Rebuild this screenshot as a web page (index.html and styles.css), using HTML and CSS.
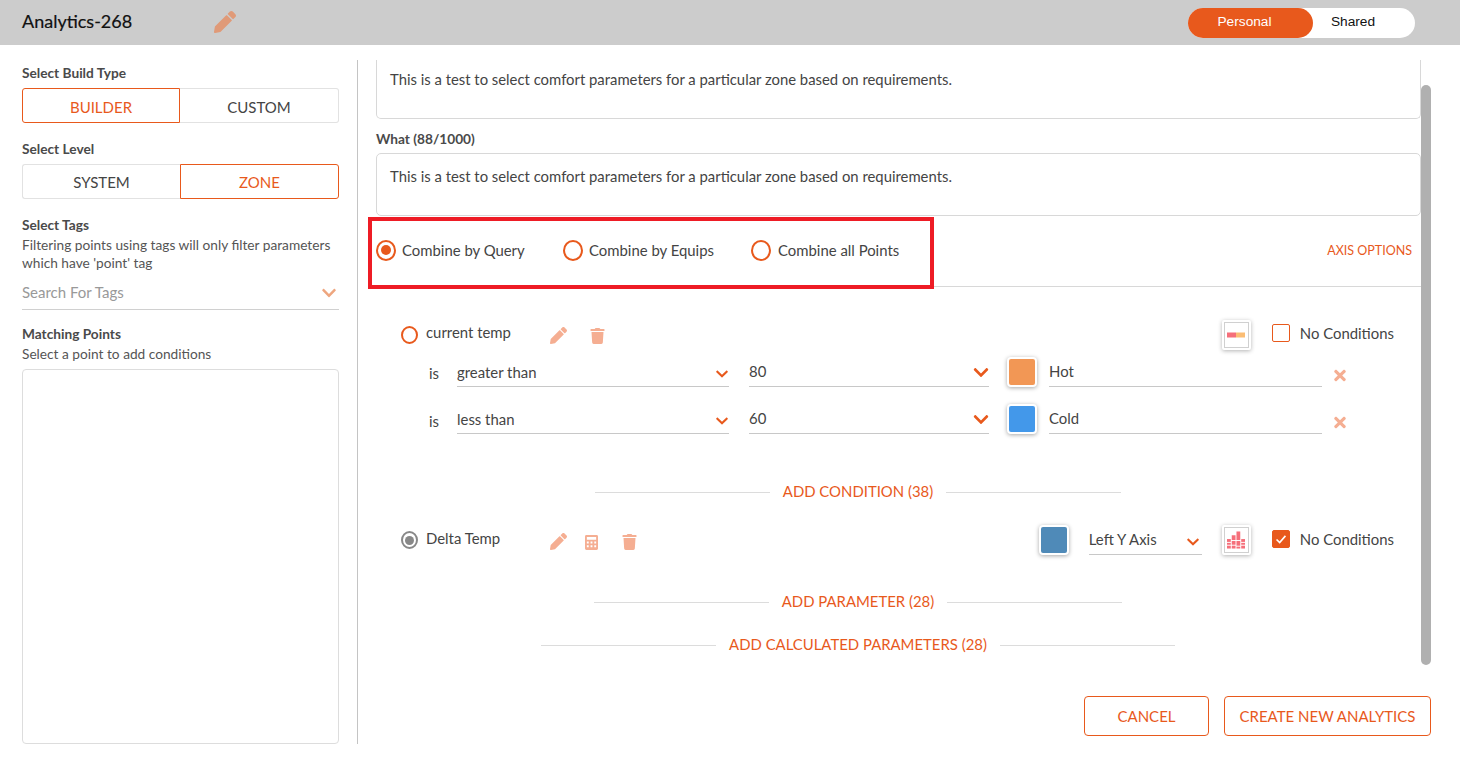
FILE: index.html
```html
<!DOCTYPE html>
<html lang="en">
<head>
<meta charset="utf-8">
<title>Analytics-268</title>
<link rel="stylesheet" href="styles.css">
</head>
<body>
<svg class="defs" aria-hidden="true">
  <symbol id="i-pencil" viewBox="0 0 512 512"><path d="M497.9 142.1l-46.1 46.1c-4.7 4.7-12.3 4.7-17 0l-111-111c-4.7-4.7-4.7-12.3 0-17l46.1-46.1c18.7-18.7 49.1-18.7 67.9 0l60.1 60.1c18.8 18.7 18.8 49.1 0 67.9zM284.2 99.8L21.6 362.4.4 483.9c-2.9 16.4 11.4 30.6 27.8 27.8l121.5-21.3 262.6-262.6c4.7-4.7 4.7-12.3 0-17l-111-111c-4.8-4.7-12.4-4.7-17.1 0z"/></symbol>
  <symbol id="i-trash" viewBox="0 0 448 512"><path d="M432 32H312l-9.4-18.7A24 24 0 0 0 281.1 0H166.8a23.72 23.72 0 0 0-21.4 13.3L136 32H16A16 16 0 0 0 0 48v32a16 16 0 0 0 16 16h416a16 16 0 0 0 16-16V48a16 16 0 0 0-16-16zM53.2 467a48 48 0 0 0 47.9 45h245.8a48 48 0 0 0 47.9-45L416 128H32z"/></symbol>
  <symbol id="i-chev" viewBox="0 0 448 512"><path d="M207.029 381.476L12.686 187.132c-9.373-9.373-9.373-24.569 0-33.941l22.667-22.667c9.357-9.357 24.522-9.375 33.901-.04L224 284.505l154.745-154.021c9.379-9.335 24.544-9.317 33.901.04l22.667 22.667c9.373 9.373 9.373 24.569 0 33.941L240.971 381.476c-9.373 9.372-24.569 9.372-33.942 0z"/></symbol>
  <symbol id="i-x" viewBox="0 0 352 512"><path d="M242.72 256l100.07-100.07c12.28-12.28 12.28-32.19 0-44.48l-22.24-22.24c-12.28-12.28-32.19-12.28-44.48 0L176 189.28 75.93 89.21c-12.28-12.28-32.19-12.28-44.48 0L9.21 111.45c-12.28 12.28-12.28 32.19 0 44.48L109.28 256 9.21 356.07c-12.28 12.28-12.28 32.19 0 44.48l22.24 22.24c12.28 12.28 32.2 12.28 44.48 0L176 322.72l100.07 100.07c12.28 12.28 32.2 12.28 44.48 0l22.24-22.24c12.28-12.28 12.28-32.19 0-44.48L242.72 256z"/></symbol>
  <symbol id="i-calc" viewBox="0 0 14 16"><path fill-rule="evenodd" d="M1.5 0h11A1.5 1.5 0 0 1 14 1.5v13a1.5 1.5 0 0 1-1.500 1.500h-11A1.500 1.500 0 0 1 0 14.500v-13A1.500 1.500 0 0 1 1.500 0zM2 2v3h10V2zM2 7v2h2V7zM6 7v2h2V7zM10 7v2h2V7zM2 11v2h2v-2zM6 11v2h2v-2zM10 11v2h2v-2z"/></symbol>
</svg>

<header class="topbar">
  <h1 class="title">Analytics-268</h1>
  <svg class="title-edit"><use href="#i-pencil"/></svg>
  <div class="scope">
    <span class="scope-item scope-on">Personal</span>
    <span class="scope-item">Shared</span>
  </div>
</header>

<div class="content">
  <aside class="sidebar">
    <div class="side-label">Select Build Type</div>
    <div class="seg">
      <span class="seg-item seg-low seg-on">BUILDER</span>
      <span class="seg-item seg-low">CUSTOM</span>
    </div>
    <div class="side-label side-gap">Select Level</div>
    <div class="seg">
      <span class="seg-item">SYSTEM</span>
      <span class="seg-item seg-on">ZONE</span>
    </div>
    <div class="side-label side-gap">Select Tags</div>
    <p class="side-note">Filtering points using tags will only filter parameters which have 'point' tag</p>
    <div class="tag-search">
      <span class="tag-text">Search For Tags</span>
      <svg class="tag-chev"><use href="#i-chev"/></svg>
    </div>
    <div class="side-label match-label">Matching Points</div>
    <p class="side-note">Select a point to add conditions</p>
    <div class="points-box"></div>
  </aside>

  <main class="main">
    <div class="pane">
      <div class="textbox textbox-first">This is a test to select comfort parameters for a particular zone based on requirements.</div>
      <div class="what-label">What (88/1000)</div>
      <div class="textbox textbox-second">This is a test to select comfort parameters for a particular zone based on requirements.</div>

      <div class="combine">
        <label class="combine-item combine-a"><span class="radio radio-big radio-on"></span>Combine by Query</label>
        <label class="combine-item combine-b"><span class="radio radio-big"></span>Combine by Equips</label>
        <label class="combine-item combine-c"><span class="radio radio-big"></span>Combine all Points</label>
        <span class="axis-link">AXIS OPTIONS</span>
        <div class="highlight"></div>
      </div>

      <div class="params">
        <div class="param param-first">
          <span class="radio radio-small"></span>
          <span class="param-name">current temp</span>
          <svg class="ico ico-pencil"><use href="#i-pencil"/></svg>
          <svg class="ico ico-trash ico-trash-a"><use href="#i-trash"/></svg>
          <span class="param-spacer"></span>
          <span class="thumb">
            <svg class="thumb-art" viewBox="0 0 18 18"><rect x="0" y="6.500" width="9" height="5" fill="#f56f7a"/><rect x="9" y="6.500" width="9" height="5" fill="#fbbd74"/></svg>
          </span>
          <span class="check"></span>
          <span class="check-text">No Conditions</span>
        </div>

        <div class="cond cond-first">
          <span class="cond-is">is</span>
          <div class="field field-op"><span class="op-text">greater than</span><svg class="chev chev-small"><use href="#i-chev"/></svg></div>
          <div class="field field-val"><span class="val-text">80</span><svg class="chev"><use href="#i-chev"/></svg></div>
          <span class="swatch swatch-orange"></span>
          <div class="field field-name"><span class="val-text">Hot</span></div>
          <svg class="ico-x"><use href="#i-x"/></svg>
        </div>
        <div class="cond cond-second">
          <span class="cond-is cond-is-low">is</span>
          <div class="field field-op"><span class="op-text">less than</span><svg class="chev chev-small"><use href="#i-chev"/></svg></div>
          <div class="field field-val"><span class="val-text">60</span><svg class="chev"><use href="#i-chev"/></svg></div>
          <span class="swatch swatch-blue"></span>
          <div class="field field-name"><span class="val-text">Cold</span></div>
          <svg class="ico-x"><use href="#i-x"/></svg>
        </div>

        <div class="adder adder-cond"><i class="adder-line"></i><span>ADD CONDITION (38)</span><i class="adder-line"></i></div>

        <div class="param param-delta">
          <span class="radio radio-small radio-grey"></span>
          <span class="param-name">Delta Temp</span>
          <svg class="ico ico-pencil"><use href="#i-pencil"/></svg>
          <svg class="ico ico-calc"><use href="#i-calc"/></svg>
          <svg class="ico ico-trash ico-trash-b"><use href="#i-trash"/></svg>
          <span class="param-spacer"></span>
          <span class="swatch swatch-steel"></span>
          <div class="field field-axis"><span class="axis-text">Left Y Axis</span><svg class="chev chev-small"><use href="#i-chev"/></svg></div>
          <span class="thumb">
            <svg class="thumb-art" viewBox="0 0 19 18">
              <g fill="#f56f7a">
                <rect x="0" y="8" width="4" height="3"/><rect x="0" y="12" width="4" height="2"/><rect x="0" y="15" width="4" height="3"/>
                <rect x="5" y="4" width="4" height="5"/><rect x="5" y="10" width="4" height="4"/><rect x="5" y="15" width="4" height="3"/>
                <rect x="10" y="0" width="4" height="9"/><rect x="10" y="10" width="4" height="5"/><rect x="10" y="16" width="4" height="2"/>
                <rect x="15" y="8" width="4" height="3"/><rect x="15" y="12" width="4" height="2"/><rect x="15" y="15" width="4" height="3"/>
              </g>
            </svg>
          </span>
          <span class="check check-on"><svg class="check-mark" viewBox="0 0 18 18"><path d="M4 9.500l3.500 3.500L14 5.500" fill="none" stroke="#fff" stroke-width="1.800"/></svg></span>
          <span class="check-text">No Conditions</span>
        </div>

        <div class="adder adder-param"><i class="adder-line"></i><span>ADD PARAMETER (28)</span><i class="adder-line"></i></div>
        <div class="adder adder-calc"><i class="adder-line"></i><span>ADD CALCULATED PARAMETERS (28)</span><i class="adder-line"></i></div>
      </div>
      <div class="scroll-thumb"></div>
    </div>

    <div class="actions">
      <button class="btn btn-cancel">CANCEL</button>
      <button class="btn btn-create">CREATE NEW ANALYTICS</button>
    </div>
  </main>
</div>
</body>
</html>
```

FILE: styles.css
```css
* { box-sizing: border-box; }
html, body { margin: 0; height: 100%; }
body {
  width: 1460px;
  height: 768px;
  overflow: hidden;
  background: #fff;
  color: #444;
  font-family: Lato, "Liberation Sans", sans-serif;
  font-size: 14.9px;
}
.defs { display: none; }

/* Top bar */
.topbar {
  height: 45px;
  background: #ccc;
  display: flex;
  align-items: center;
  padding: 0 45px 2px 22px;
}
.title { margin: -2px 0 0; width: 192px; font-size: 18px; font-weight: 400; color: #111; -webkit-text-stroke: 0.2px #111; }
.title-edit { width: 22px; height: 22px; fill: #e09a78; }
.scope {
  margin-left: auto;
  width: 227px;
  height: 30px;
  margin-top: 2px;
  background: #fff;
  border-radius: 15px;
  display: flex;
  font-family: "Liberation Sans", Arial, sans-serif;
  font-size: 13.700px;
  color: #111;
}
.scope-item { display: flex; align-items: center; justify-content: center; width: 80px; padding-bottom: 2px; }
.scope-on { width: 125px; padding-right: 12px; background: #e8591c; color: #fff; border-radius: 15px; }

/* Layout */
.content { display: flex; }

/* Sidebar */
.sidebar {
  width: 358px;
  height: 684px;
  margin-top: 15px;
  padding: 5px 18px 0 22px;
  border-right: 1px solid #c4c4c4;
  display: flex;
  flex-direction: column;
}
.side-label { font-size: 13.700px; font-weight: 700; color: #4a4a4a; line-height: 16px; height: 16px; }
.side-gap { margin-top: 18px; }
.seg { display: flex; height: 35px; margin-top: 7px; }
.seg-item {
  flex: 1;
  display: flex;
  align-items: center;
  justify-content: center;
  border: 1px solid #e2e2e2;
  font-size: 15px;
  color: #444;
}
.seg-low { padding-top: 2px; }
.seg-item:first-child { flex: none; width: 158px; border-radius: 3px 0 0 3px; border-right: 0; }
.seg-item:last-child { border-radius: 0 3px 3px 0; border-left: 0; }
.seg-on, .seg-item.seg-on:first-child, .seg-item.seg-on:last-child { border: 1px solid #e8591c; color: #e8591c; }
.side-note { margin: 3px 0 0; font-size: 13.700px; line-height: 18px; color: #555; }
.tag-search {
  margin-top: 4px;
  height: 34px;
  padding-right: 3px;
  display: flex;
  align-items: center;
  justify-content: space-between;
  border-bottom: 1px solid #d0d0d0;
  color: #999;
  font-size: 15px;
}
.tag-text { margin-top: -2px; }
.tag-chev { width: 14px; height: 16px; fill: #eea67f; }
.match-label { margin-top: 16px; }
.points-box { margin-top: 6px; flex: 1; border: 1px solid #ddd; border-radius: 4px; }

/* Main */
.main { flex: 1; padding: 15px 29px 0 18px; }
.pane { position: relative; height: 605px; padding-right: 10px; }
.textbox {
  border: 1px solid #d8d8d8;
  padding: 0 13px;
  font-size: 14.850px;
  color: #444;
}
.textbox-first { height: 59px; border-top: 0; border-radius: 0 0 5px 5px; padding-top: 10px; }
.what-label { margin-top: 12px; font-size: 13.700px; font-weight: 700; color: #4a4a4a; height: 22px; line-height: 16px; }
.textbox-second { height: 63px; border-radius: 5px; padding-top: 13px; }

.combine {
  position: relative;
  height: 71px;
  padding-bottom: 2px;
  border-bottom: 1px solid #d8d8d8;
  display: flex;
  align-items: center;
}
.combine-item { display: flex; align-items: center; color: #444; }
.combine-a { width: 187px; }
.combine-b { width: 188px; }
.combine-c .radio { margin-right: 7px; }
.axis-link { margin-left: auto; margin-right: 9px; font-size: 12.500px; color: #e8591c; }
.highlight {
  position: absolute;
  left: -8px;
  top: 1px;
  width: 566px;
  height: 72px;
  border: 4px solid #ee1c25;
  pointer-events: none;
}

.radio {
  display: inline-block;
  flex: none;
  position: relative;
  border: 2px solid #e8591c;
  border-radius: 50%;
  background: #fff;
}
.radio-big { width: 20px; height: 21px; margin-right: 6px; }
.radio-on::after, .radio-grey::after {
  content: "";
  position: absolute;
  left: 50%;
  top: 50%;
  width: 10px;
  height: 10px;
  margin: -5px 0 0 -5px;
  border-radius: 50%;
  background: #e8591c;
}
.radio-small { width: 17px; height: 18px; margin: 0 8px 0 1px; }
.radio-grey { border-color: #888; }
.radio-grey::after { width: 9px; height: 9px; margin: -4.500px 0 0 -4.500px; background: #888; }

/* Params */
.params { padding: 33px 27px 0 24px; }
.param { display: flex; align-items: center; height: 30px; }
.param-name { width: 124px; color: #444; margin-top: -5px; }
.param-first .param-name { margin-top: -7px; }
.param-spacer { flex: 1; }
.ico { fill: #f5ae92; flex: none; margin-top: 3px; }
.param-first .ico { margin-top: 1px; }
.ico-pencil { width: 17px; height: 17px; }
.ico-trash { width: 15px; height: 16px; }
.ico-trash-a { margin-left: 23px; }
.ico-calc { width: 13px; height: 15px; margin-left: 18px; margin-top: 4px; }
.ico-trash-b { margin-left: 24px; }
.thumb {
  width: 29px;
  height: 30px;
  background: #fff;
  border: 3px solid #fff;
  outline: 1px solid #d0d0d0;
  outline-offset: -3px;
  box-shadow: 0 1px 4px rgba(0,0,0,.3);
  border-radius: 2px;
  display: flex;
  align-items: center;
  justify-content: center;
  flex: none;
}
.thumb-art { width: 18px; height: 18px; flex: none; }
.check {
  width: 18px;
  height: 18px;
  margin-left: 21px;
  margin-top: -2px;
  border: 1px solid #e8591c;
  border-radius: 2px;
  flex: none;
}
.param-first .check { margin-top: -4px; }
.check-on { background: #e8591c; }
.check-mark { display: block; width: 16px; height: 16px; }
.check-text { margin-left: 10px; margin-top: -3px; color: #444; }
.param-first .check-text { margin-top: -5px; }

.cond { display: flex; align-items: center; height: 30px; padding-left: 29px; }
.cond-first { margin-top: 7px; }
.cond-second { margin-top: 17px; }
.cond-is { width: 28px; color: #444; margin-top: 2px; }
.cond-is-low { margin-top: 4px; }
.field {
  display: flex;
  align-items: center;
  justify-content: space-between;
  height: 30px;
  border-bottom: 1px solid #c8c8c8;
  color: #444;
  padding-top: 2px;
}
.op-text { margin-top: -2px; }
.val-text { margin-top: -4px; }
.axis-text { margin-top: -4px; }
.field-op { width: 272px; padding-right: 1px; }
.field-val { width: 240px; margin-left: 20px; }
.field-name { width: 273px; margin-left: 12px; height: 29px; }
.field-axis { width: 113px; margin: 0 20px; height: 29px; padding-right: 3px; }
.chev { width: 16px; height: 17px; fill: #e8591c; }
.chev-small { width: 12px; height: 14px; margin-top: 3px; }
.swatch {
  flex: none;
  width: 30px;
  height: 30px;
  border: 2px solid #fff;
  border-radius: 4px;
  box-shadow: 0 1px 4px rgba(0,0,0,.35);
}
.cond .swatch { margin-left: 18px; }
.swatch-orange { background: #f29755; }
.swatch-blue { background: #4398ea; }
.swatch-steel { background: #4f8ab8; }
.ico-x { width: 14px; height: 17px; margin-left: 11px; margin-top: 6px; fill: #f5ae92; }

.adder {
  width: 916px;
  height: 20px;
  display: flex;
  align-items: center;
  justify-content: center;
  gap: 13px;
  color: #e8591c;
}
.adder-line { display: block; width: 175px; height: 1px; margin-top: 2px; background: #dcdcdc; }
.adder-cond { margin-top: 47px; }
.adder-param { margin-top: 36px; }
.adder-calc { margin-top: 23px; }
.param-delta { margin-top: 24px; }

.scroll-thumb {
  position: absolute;
  right: 0;
  top: 25px;
  bottom: 0;
  width: 10px;
  background: #b0b0b0;
  border-radius: 5px;
}

/* Footer */
.actions { display: flex; justify-content: flex-end; gap: 15px; margin-top: 31px; }
.btn {
  height: 40px;
  background: #fff;
  border: 1px solid #e8591c;
  border-radius: 4px;
  color: #e8591c;
  font-family: inherit;
  font-size: 15px;
  padding: 0;
}
.btn-cancel { width: 125px; }
.btn-create { width: 207px; }
```
